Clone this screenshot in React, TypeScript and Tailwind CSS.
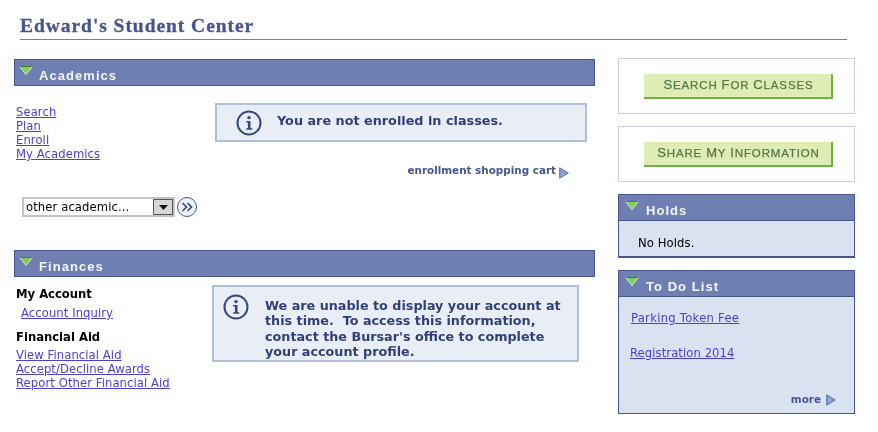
import React from "react";

const sans = "font-['DejaVu_Sans','Liberation_Sans',sans-serif]";

function Tri() {
  return (
    <svg width="14" height="9" viewBox="0 0 14 9" className="shrink-0">
      <path d="M0.5 0.5H13.5L7 8.5Z" fill="#7ed05a" stroke="#d8e8d0" strokeWidth="1" />
      <path d="M0.5 0.5H13.5" stroke="#3f7f3a" strokeWidth="1" />
    </svg>
  );
}

function Header({ title, inset = false }: { title: string; inset?: boolean }) {
  return (
    <div className={`${inset ? "h-[26px] pl-[6px] border-b" : "h-[27px] pl-[4px] border"} flex items-start bg-[#6f7fb2] border-[#47558f]`}>
      <div className="mt-[6px]"><Tri /></div>
      <span className={`mt-[9px] ${inset ? "ml-[7px]" : "ml-[6px]"} text-[13px] leading-[14px] font-bold tracking-[1.05px] text-[#f2f4fa] font-['Liberation_Sans',sans-serif]`}>{title}</span>
    </div>
  );
}

function Info() {
  return (
    <svg width="26" height="26" viewBox="0 0 26 26" className="shrink-0">
      <circle cx="13" cy="13" r="11.5" fill="none" stroke="#34477f" strokeWidth="2" />
      <circle cx="13" cy="7.6" r="1.7" fill="#34477f" />
      <path d="M10.2 11h4.3v7.2h1.8v1.6h-6.1v-1.6h1.7v-5.6h-1.7z" fill="#34477f" />
    </svg>
  );
}

function A({ children, className = "" }: { children: React.ReactNode; className?: string }) {
  return <a className={`block w-fit text-[#4a3fd0] underline text-[11.6px] leading-[14px] tracking-[0.08px] ${className}`}>{children}</a>;
}

function Arrow() {
  return (
    <svg width="10" height="12" viewBox="0 0 10 12" className="shrink-0">
      <path d="M0.7 0.8 9.3 6 0.7 11.2Z" fill="#8ba0cf" stroke="#5a70a8" strokeWidth="1" />
    </svg>
  );
}

function GreenButton({ words }: { words: string[] }) {
  return (
    <div className="w-[189px] h-[25px] bg-[#e0ecb6] border-r-2 border-b-2 border-[#6db04a] flex items-center justify-center gap-[4px] pl-[2px] text-[#56784a] text-[11.5px] tracking-[0.85px] font-['Liberation_Sans',sans-serif] [-webkit-text-stroke:0.25px_#56784a]">
      {words.map((w) => (
        <span key={w}>
          <span className="text-[13px]">{w[0]}</span>
          {w.slice(1).toUpperCase()}
        </span>
      ))}
    </div>
  );
}

export default function App() {
  return (
    <div className={`w-[878px] h-[432px] bg-white overflow-hidden blur-[0.3px] ${sans}`}>
      <div className="ml-5 w-[827px] h-[40px] pt-[16px] border-b border-[#6f7fb2]">
        <h1 className="text-[19.5px] leading-[20px] font-bold tracking-[0.95px] text-[#47558f] [-webkit-text-stroke:0.3px_#47558f] font-['Liberation_Serif',serif]">Edward's Student Center</h1>
      </div>

      <div className="flex mt-[19px] ml-[14px]">
        <div className="w-[581px]">
          <Header title="Academics" />
          <div className="flex h-[164px]">
            <div className="w-[201px] pl-[2px]">
              <div className="pt-[19px]">
                <A>Search</A>
                <A>Plan</A>
                <A>Enroll</A>
                <A>My Academics</A>
              </div>
              <div className="flex items-center ml-[6px] mt-[36px]">
                <div className="w-[153px] h-[20px] border-2 border-[#c4c4c4] flex items-center justify-between text-[11.6px] tracking-[0.1px] text-black pl-[2px]">
                  <span className="mt-[1px]">other academic...</span>
                  <span className="w-[20px] h-[16px] bg-[#d6d6d6] border border-[#555] flex items-center justify-center">
                    <svg width="9" height="5" viewBox="0 0 9 5"><path d="M0 0H9L4.5 5Z" fill="#111" /></svg>
                  </span>
                </div>
                <span className="ml-[2px] w-[20px] h-[20px] rounded-full border border-[#47558f] bg-[#eef1f8] flex items-center justify-center">
                  <svg width="12" height="10" viewBox="0 0 12 10" fill="none" stroke="#34477f" strokeWidth="1.6"><path d="M1.5 1 5.5 5 1.5 9M6.5 1 10.5 5 6.5 9" /></svg>
                </span>
              </div>
            </div>
            <div className="w-[372px] pt-[17px]">
              <div className="h-[39px] bg-[#e9edf5] border-2 border-[#aebfdc] flex items-center pl-[19px]">
                <Info />
                <span className="ml-[15px] text-[12.8px] leading-[16px] font-bold text-[#2f3f78] -mt-[4px]">You are not enrolled in classes.</span>
              </div>
              <div className="flex justify-end items-center mt-[20px] pr-[18px] text-[10.4px] font-bold text-[#47558f]">
                <span>enrollment shopping cart</span>
                <span className="ml-[3px] mt-[5px]"><Arrow /></span>
              </div>
            </div>
          </div>
          <Header title="Finances" />
          <div className="flex">
            <div className="w-[198px] pl-[2px]">
              <div className="mt-[10px] text-[11.6px] leading-[14px] font-bold text-black">My Account</div>
              <A className="ml-[5px] mt-[5px]">Account Inquiry</A>
              <div className="mt-[10px] text-[11.6px] leading-[14px] font-bold text-black">Financial Aid</div>
              <div className="mt-[4px]">
                <A>View Financial Aid</A>
                <A>Accept/Decline Awards</A>
                <A>Report Other Financial Aid</A>
              </div>
            </div>
            <div className="w-[367px] h-[77px] mt-[8px] bg-[#e9edf5] border-2 border-[#aebfdc] flex items-start pl-[9px] pt-[7px]">
              <Info />
              <p className="ml-[16px] mt-[4px] w-[310px] text-[12.75px] leading-[15.3px] font-bold text-[#2f3f78] whitespace-pre-wrap">{"We are unable to display your account at\nthis time.  To access this information,\ncontact the Bursar's office to complete\nyour account profile."}</p>
            </div>
          </div>
        </div>

        <div className="ml-[23px] w-[237px] -mt-px">
          <div className="h-[56px] border border-[#c8d0e6] flex items-center pl-[25px]">
            <GreenButton words={["Search", "For", "Classes"]} />
          </div>
          <div className="h-[56px] mt-[12px] border border-[#c8d0e6] flex items-center pl-[25px]">
            <GreenButton words={["Share", "My", "Information"]} />
          </div>
          <div className="mt-[12px] h-[64px] bg-[#d9e2f1] border border-[#47558f] border-b-2">
            <Header title="Holds" inset />
            <div className="pl-[19px] pt-[15px] text-[11.6px] leading-[14px] tracking-[0.1px] text-black">No Holds.</div>
          </div>
          <div className="mt-[12px] h-[144px] bg-[#d9e2f1] border border-[#47558f] flex flex-col">
            <Header title="To Do List" inset />
            <A className="ml-[12px] mt-[14px] tracking-[0.27px]">Parking Token Fee</A>
            <A className="ml-[11px] mt-[21px]">Registration 2014</A>
            <div className="mt-auto mb-[5px] flex justify-end items-center pr-[18px] text-[10.4px] font-bold text-[#47558f]">
              <span>more</span>
              <span className="ml-[5px]"><Arrow /></span>
            </div>
          </div>
        </div>
      </div>
    </div>
  );
}
